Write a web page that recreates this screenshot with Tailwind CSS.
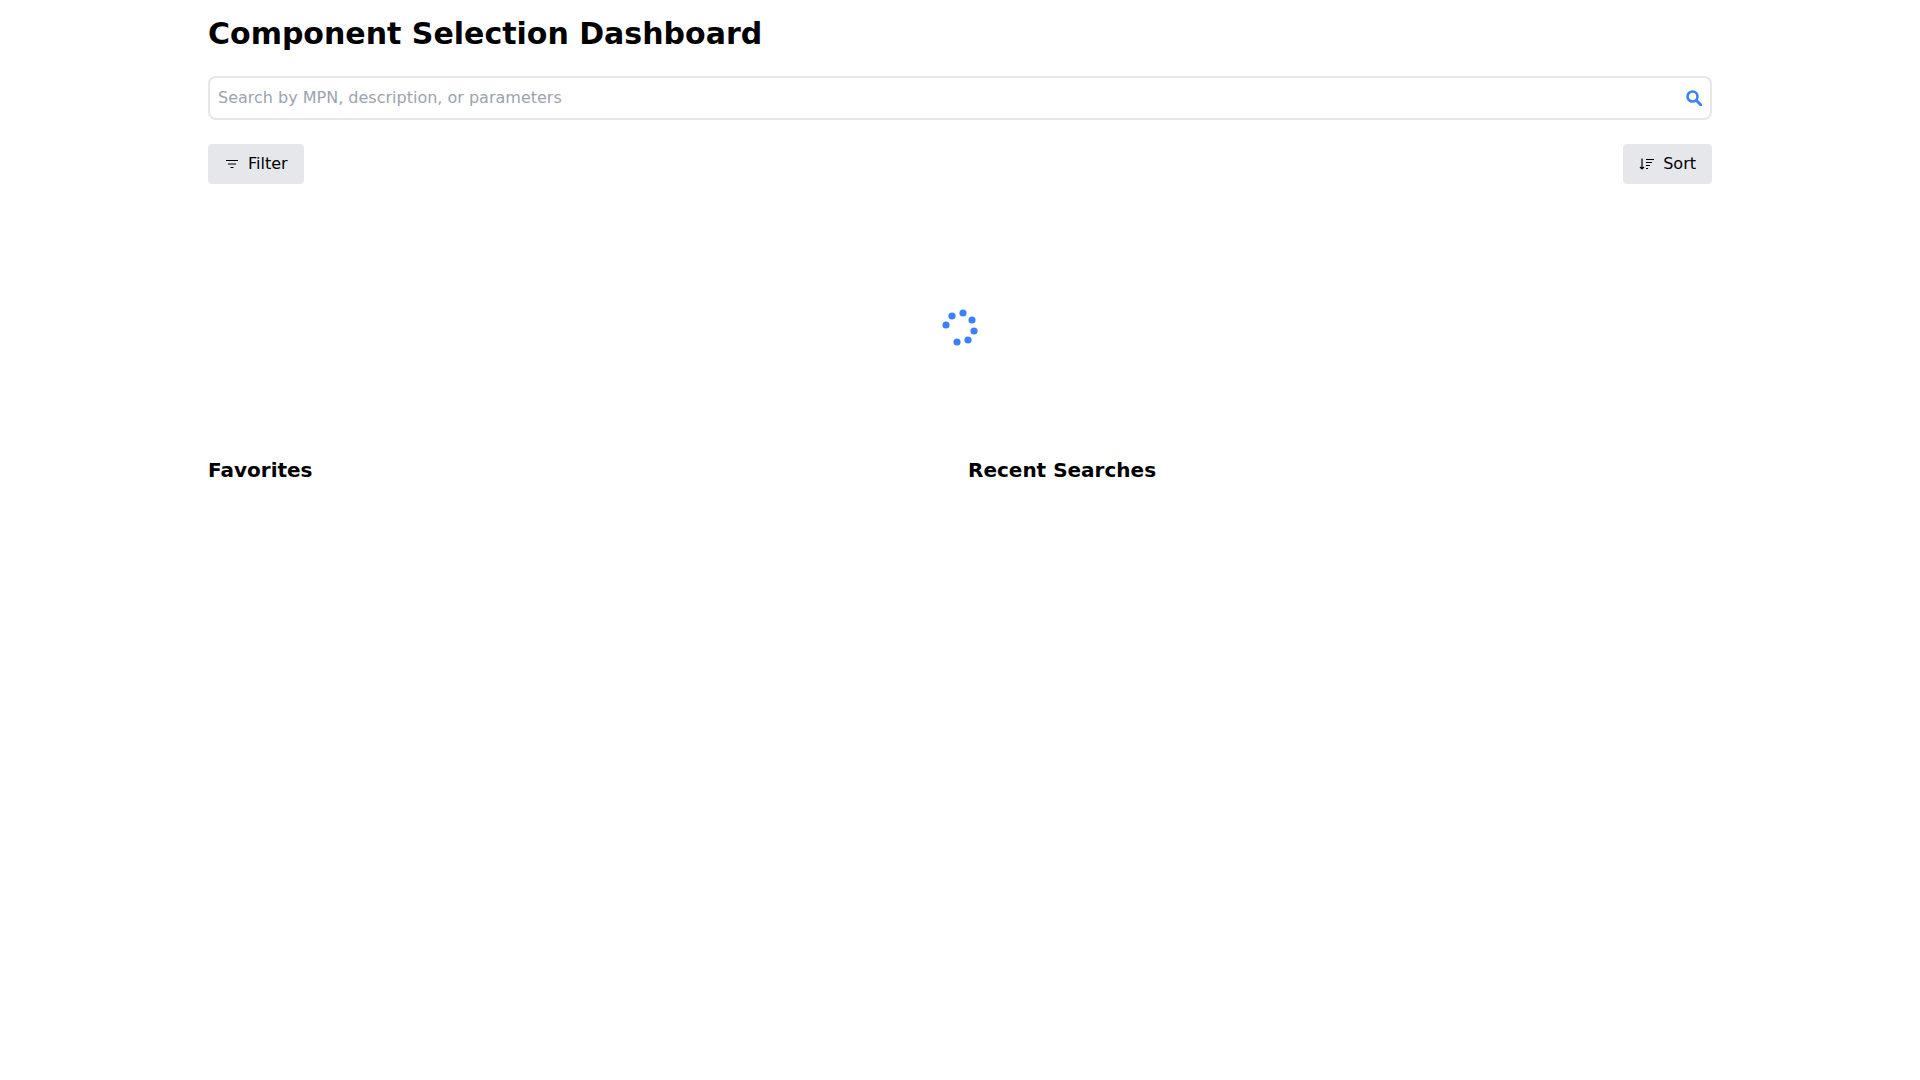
<!DOCTYPE html>
<html><head><script src="https://cdn.jsdelivr.net/npm/@tailwindcss/browser@4"></script></head>
<body class="bg-white font-['DejaVu_Sans',sans-serif] text-black">
<div class="w-[1504px] mx-auto">
<h1 class="text-[30px] leading-[36px] font-bold pt-[16px] mb-[24px]">Component Selection Dashboard</h1>
<div class="relative mb-[24px]">
<div class="h-[44px] border-2 border-[#e5e7eb] rounded-lg px-2 flex items-center text-base text-[#9ca3af]">Search by MPN, description, or parameters</div>
<svg class="absolute right-[10px] top-[14px] w-4 h-4" viewBox="0 0 16 16" fill="none" stroke="#3b82f6"><circle cx="6.500" cy="6.500" r="5" stroke-width="2.600"/><path d="M10.500 10.500L15 15" stroke-width="3" stroke-linecap="round"/></svg>
</div>
<div class="flex justify-between">
<button class="h-[40px] px-4 bg-[#e5e7eb] rounded flex items-center gap-2 text-base"><svg class="w-4 h-4" viewBox="0 0 16 16" fill="none" stroke="#000" stroke-width="1.100"><path d="M2 4.500h12M4 8h8M6.500 11.500h3"/></svg>Filter</button>
<button class="h-[40px] px-4 bg-[#e5e7eb] rounded flex items-center gap-2 text-base"><svg class="w-4 h-4" viewBox="0 0 16 16" fill="none" stroke="#000" stroke-width="1.200"><path d="M3 2.500v10.500M1 11l2 2 2-2M7 3.500h8M7 6.500h6M7 9.500h4M7 12.500h2"/></svg>Sort</button>
</div>
<div class="h-[272px] pt-[125px] flex items-start justify-center">
<svg width="38" height="38" viewBox="0 0 38 38" fill="#3b82f6"><circle cx="22" cy="4" r="3.600"/><circle cx="31" cy="11" r="3.600"/><circle cx="33" cy="22" r="3.600"/><circle cx="27" cy="31" r="3.600"/><circle cx="16" cy="33" r="3.600"/><circle cx="5" cy="16" r="3.600"/><circle cx="11" cy="7" r="3.600"/></svg>
</div>
<div class="grid grid-cols-2 gap-4">
<h2 class="text-[20px] leading-[28px] font-bold">Favorites</h2>
<h2 class="text-[20px] leading-[28px] font-bold">Recent Searches</h2>
</div>
</div>
</body></html>
